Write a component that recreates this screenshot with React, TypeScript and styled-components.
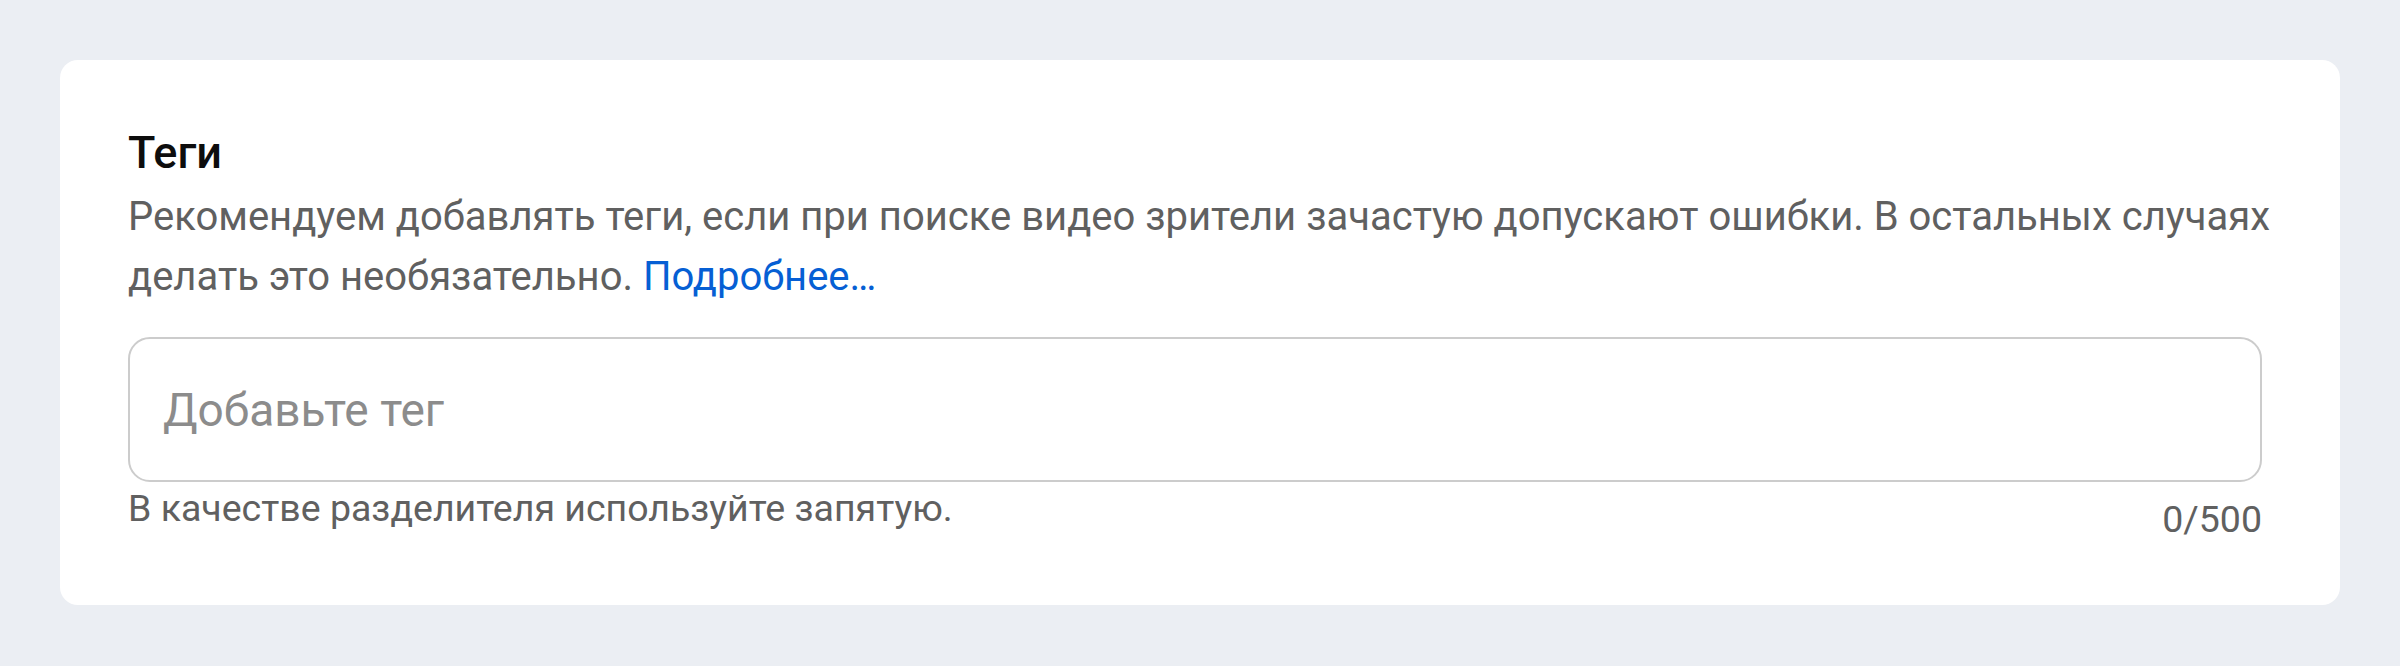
import React from "react";
import styled, { createGlobalStyle } from "styled-components";

const GlobalStyle = createGlobalStyle`
    html, body {
        margin: 0;
        padding: 0;
        background-color: #ebeef3;
    }
    body {
        font-family: Roboto, "Noto Sans", "Liberation Sans", sans-serif;
    }
`;

const SPage = styled.div`
    padding: 60px;
`;

const SCard = styled.section`
    box-sizing: border-box;
    width: 2280px;
    height: 545px;
    padding: 67px 78px 0 68px;
    background-color: #ffffff;
    border-radius: 18px;
`;

const STitle = styled.h2`
    margin: 0;
    font-size: 45px;
    line-height: 52px;
    font-weight: 500;
    color: #0d0d0d;
`;

const SDescription = styled.p`
    /* the first line nearly fills the field width, give it a little slack */
    margin: 8px -30px 0 0;
    font-size: 40px;
    line-height: 60px;
    font-weight: 400;
    color: #606060;
`;

const SLink = styled.a`
    color: #065fd4;
    text-decoration: none;
    cursor: pointer;
`;

const SInput = styled.input`
    display: block;
    box-sizing: border-box;
    width: 100%;
    height: 145px;
    margin-top: 30px;
    padding: 0 33px;
    border: 2px solid #cccccc;
    border-radius: 22px;
    outline: none;
    background: #ffffff;
    font-family: inherit;
    font-size: 46px;
    color: #0d0d0d;

    &::placeholder {
        color: #8c8c8c;
    }
`;

const SFooter = styled.div`
    display: flex;
    justify-content: space-between;
    align-items: flex-start;
`;

const SHint = styled.span<{ offset: number }>`
    margin-top: ${({ offset }) => offset}px;
    font-size: 37.5px;
    line-height: 44px;
    color: #606060;
`;

export default function App() {
    return (
        <SPage>
            <GlobalStyle />
            <SCard>
                <STitle>Теги</STitle>
                <SDescription>
                    Рекомендуем добавлять теги, если при поиске видео зрители зачастую допускают ошибки. В остальных случаях делать это необязательно.{" "}
                    <SLink>Подробнее…</SLink>
                </SDescription>
                <SInput type="text" placeholder="Добавьте тег" />
                <SFooter>
                    <SHint offset={4}>В качестве разделителя используйте запятую.</SHint>
                    <SHint offset={15}>0/500</SHint>
                </SFooter>
            </SCard>
        </SPage>
    );
}
